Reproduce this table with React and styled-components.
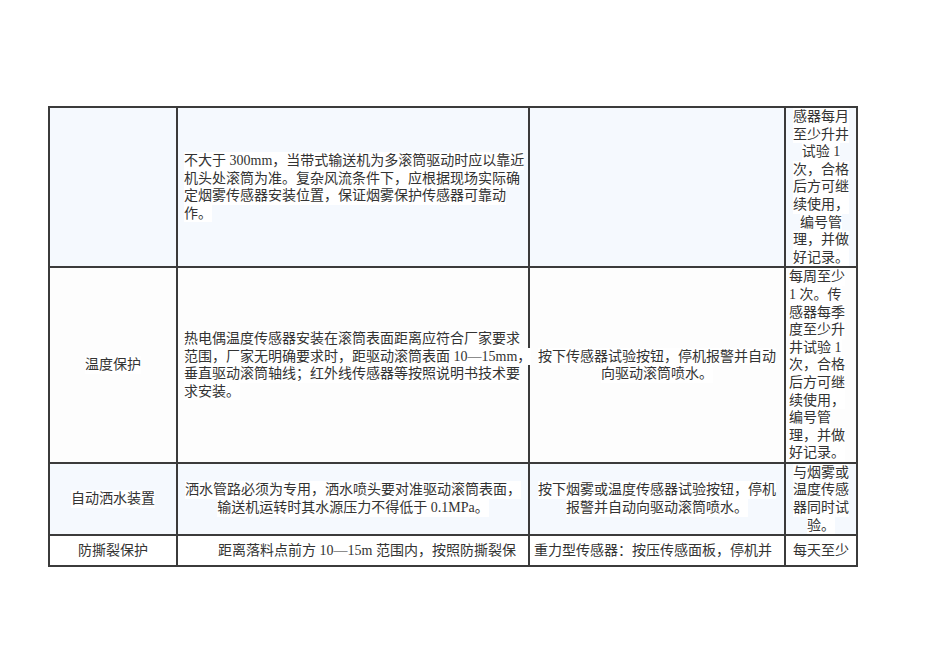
import React from 'react'
import styled, { createGlobalStyle } from 'styled-components';

const Global = createGlobalStyle`
  html, body { margin: 0; padding: 0; background: #fff; }
  body { font-family: "Liberation Serif", "Noto Sans CJK SC", serif; color: #333; }
`;

const Page = styled.div`
  width: 950px; height: 672px; padding: 106px 0 0 48px; box-sizing: border-box; overflow: hidden;
`;

const Table = styled.table`
  border-collapse: collapse; table-layout: fixed; width: 808px;
`;

const Row = styled.tr`
  background: ${p => p.$bg || '#fff'};
  height: ${p => p.$h}px;
`;

const Cell = styled.td`
  border: 2px solid #3b3b3b; padding: 0 ${p => p.$pad ?? 5}px; vertical-align: middle;
  font-size: 14px; line-height: 17.6px;
`;

const Lines = styled.div`
  display: flex; flex-direction: column;
  align-items: ${p => p.$align === 'left' ? 'flex-start' : 'center'};
`;

const Line = styled.span`
  background: #fff; white-space: pre; padding-left: ${p => p.$indent || 0}px;
`;

function Text({ lines, align, indent }) {
  return (
    <Lines $align={align}>
      {lines.map((l, i) => <Line key={i} $indent={i === 0 ? indent : 0}>{l}</Line>)}
    </Lines>
  );
}

const rows = [
  {
    bg: '#f5f9fe', h: 160,
    name: [],
    spec: { align: 'left', lines: ['不大于 300mm，当带式输送机为多滚筒驱动时应以靠近', '机头处滚筒为准。复杂风流条件下，应根据现场实际确', '定烟雾传感器安装位置，保证烟雾保护传感器可靠动', '作。'] },
    test: { lines: [] },
    cycle: { align: 'center', lines: ['感器每月', '至少升井', '试验 1', '次，合格', '后方可继', '续使用，', '编号管', '理，并做', '好记录。'] },
  },
  {
    bg: '#fdfdfd', h: 194,
    name: ['温度保护'],
    spec: { align: 'left', lines: ['热电偶温度传感器安装在滚筒表面距离应符合厂家要求', '范围，厂家无明确要求时，距驱动滚筒表面 10—15mm，', '垂直驱动滚筒轴线；红外线传感器等按照说明书技术要', '求安装。'] },
    test: { align: 'center', lines: ['按下传感器试验按钮，停机报警并自动', '向驱动滚筒喷水。'] },
    cycle: { align: 'left', lines: ['每周至少', '1 次。传', '感器每季', '度至少升', '井试验 1', '次，合格', '后方可继', '续使用，', '编号管', '理，并做', '好记录。'] },
  },
  {
    bg: '#f5f9fe', h: 71,
    name: ['自动洒水装置'],
    spec: { align: 'center', lines: ['洒水管路必须为专用，洒水喷头要对准驱动滚筒表面，', '输送机运转时其水源压力不得低于 0.1MPa。'] },
    test: { align: 'center', lines: ['按下烟雾或温度传感器试验按钮，停机', '报警并自动向驱动滚筒喷水。'] },
    cycle: { align: 'center', lines: ['与烟雾或', '温度传感', '器同时试', '验。'] },
  },
  {
    bg: '#fff', h: 31,
    name: ['防撕裂保护'],
    spec: { align: 'left', indent: 34, lines: ['距离落料点前方 10—15m 范围内，按照防撕裂保'] },
    test: { align: 'left', lines: ['重力型传感器：按压传感面板，停机并'] },
    cycle: { align: 'center', lines: ['每天至少'] },
  },
];

export default function App() {
  return (
    <Page>
      <Global />
      <Table>
        <colgroup>
          <col style={{ width: 128 }} />
          <col style={{ width: 352 }} />
          <col style={{ width: 256 }} />
          <col style={{ width: 72 }} />
        </colgroup>
        <tbody>
          {rows.map((r, i) => (
            <Row key={i} $bg={r.bg} $h={r.h}>
              <Cell><Text lines={r.name} align="center" /></Cell>
              <Cell $pad={6}><Text {...r.spec} /></Cell>
              <Cell $pad={4}><Text {...r.test} /></Cell>
              <Cell $pad={3}><Text {...r.cycle} /></Cell>
            </Row>
          ))}
        </tbody>
      </Table>
    </Page>
  );
}
